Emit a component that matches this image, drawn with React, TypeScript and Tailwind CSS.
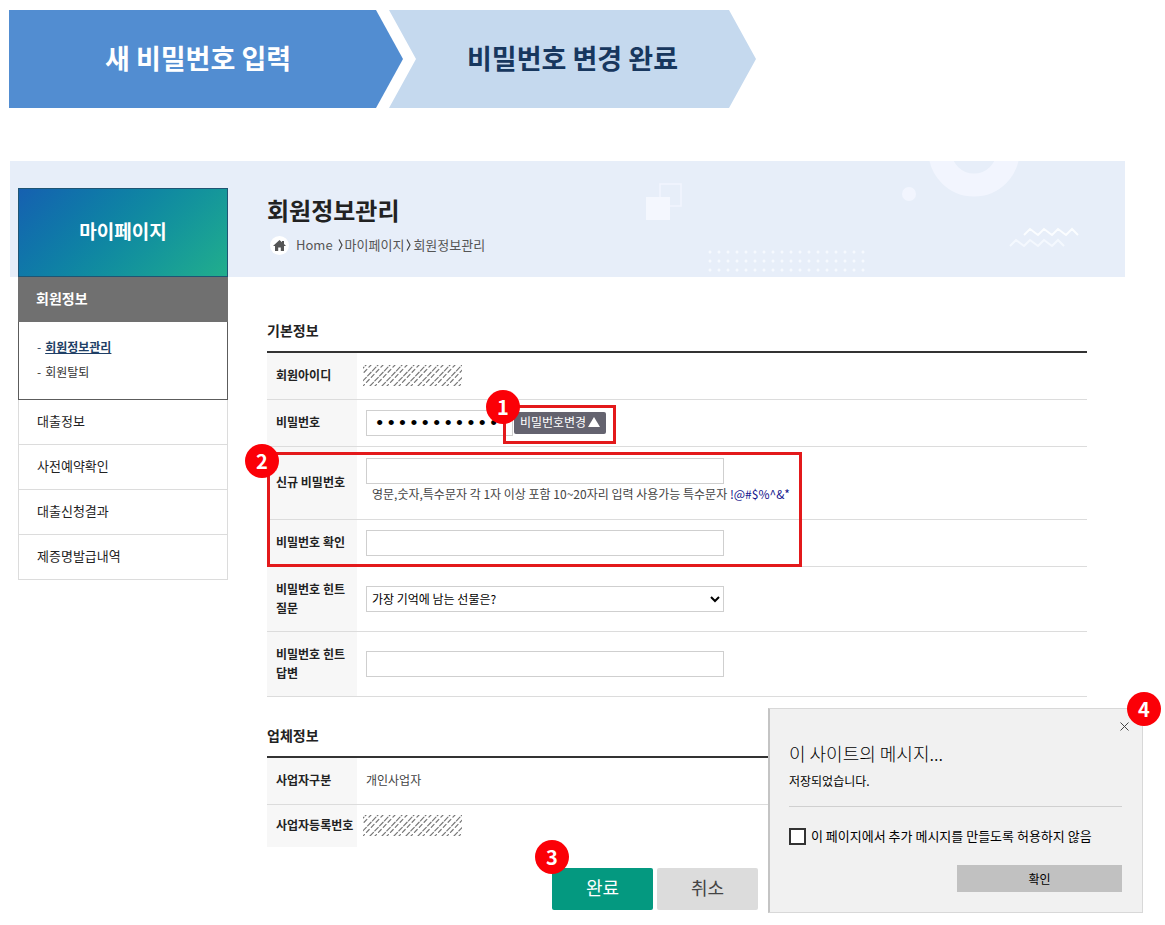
import React, { useState } from 'react';

const sideMenu = ['대출정보', '사전예약확인', '대출신청결과', '제증명발급내역'];

const inputClass = 'block h-[26px] w-[358px] border border-[#cfcfcf] bg-white px-[6px] text-[12px] outline-none';

const Badge: React.FC<{ no: number; className: string }> = ({ no, className }) => (
  <span
    className={`absolute flex size-[34px] items-center justify-center rounded-full bg-[#fb0007] text-[20px] leading-[20px] font-bold text-white ${className}`}
  >
    {no}
  </span>
);

const Masked: React.FC<{ id: string }> = ({ id }) => (
  <svg width="99" height="21" className="-ml-[3px] block" aria-label="비공개">
    <defs>
      <clipPath id={id}>
        <rect width="99" height="21" />
      </clipPath>
    </defs>
    <g clipPath={`url(#${id})`} stroke="#777" strokeWidth="1.2" strokeLinecap="round">
      {Array.from({ length: 10 }, (_, i) => (
        <React.Fragment key={i}>
          <line x1={i * 12 - 17} y1="21" x2={i * 12 + 3} y2="0" strokeDasharray="5 2" />
          <line x1={i * 12 - 12} y1="21" x2={i * 12 + 8} y2="0" strokeDasharray="4 3" strokeDashoffset="2" />
        </React.Fragment>
      ))}
    </g>
  </svg>
);

const Crumb: React.FC = () => (
  <svg width="5" height="12" viewBox="0 0 5 12" fill="none" stroke="#444" strokeWidth="1.2">
    <path d="M1 .5 4 6 1 11.5" />
  </svg>
);

const Row: React.FC<{ label: string; htmlFor?: string; height: string; last?: boolean; children: React.ReactNode }> = ({
  label,
  htmlFor,
  height,
  last,
  children,
}) => (
  <tr className={`${height} ${last ? '' : 'border-b border-[#dcdcdc]'}`}>
    <th scope="row" className="w-[90px] bg-[#f7f7f7] pb-[2px] pl-[9px] text-left text-[12px] leading-[19px] font-bold break-keep text-[#222]">
      {htmlFor ? <label htmlFor={htmlFor}>{label}</label> : label}
    </th>
    <td className="pl-[9px] text-[12px] text-[#444]">{children}</td>
  </tr>
);

const BannerArt: React.FC = () => (
  <svg width="440" height="116" viewBox="0 0 440 116" fill="none" className="absolute top-0 right-[42px]">
    <circle cx="331" cy="-10" r="34" stroke="#f2f5fe" strokeWidth="23" />
    <circle cx="266" cy="33" r="7" fill="#f2f5fe" />
    <rect x="17" y="23" width="21" height="22" stroke="#f2f5fe" strokeWidth="1.5" />
    <rect x="3" y="36" width="24" height="23" fill="#f4f7fe" />
    {[0, 1, 2].map(r =>
      Array.from({ length: 18 }, (_, c) => (
        <circle key={`${r}-${c}`} cx={67 + c * 9} cy={91 + r * 9} r="1.5" fill="#f6f9fe" />
      )),
    )}
    <path d="m381 74 6-6 8 6 6-6 8 6 6-6 8 6 6-6 6 6" stroke="#fbfdff" strokeWidth="2" />
    <path d="m367 85 6-6 8 6 6-6 8 6 6-6 8 6 6-6 6 6" stroke="#f4f8fe" strokeWidth="2" />
  </svg>
);

const Sidebar: React.FC = () => (
  <aside className="z-10 col-start-1 row-span-2 row-start-1 mt-[27px] ml-2 text-[13px]">
    <h2 className="flex h-[89px] items-center justify-center border border-[#1f5574] bg-linear-135 from-[#1660b0] to-[#22ae8c] pb-[2px] text-[19px] font-bold text-white">
      마이페이지
    </h2>
    <a href="#member" className="flex h-[45px] items-center bg-[#707070] px-[18px] pb-[2px] text-[14px] font-bold text-white">
      회원정보
    </a>
    <ul className="h-[78px] border border-t-0 border-[#5c5c5c] px-[18px] pt-3 text-[12px] leading-[25px] text-[#333]">
      <li>
        <span className="mr-1 text-[#1f3f66]">-</span>
        <a href="#info" className="font-bold text-[#1f3f66] underline">회원정보관리</a>
      </li>
      <li>
        <span className="mr-1">-</span>
        <a href="#leave">회원탈퇴</a>
      </li>
    </ul>
    <ul className="border-x border-[#dcdcdc] text-[#222]">
      {sideMenu.map(item => (
        <li key={item} className="border-b border-[#dcdcdc]">
          <a href="#menu" className="flex h-[44px] items-center px-[18px] pb-[2px]">{item}</a>
        </li>
      ))}
    </ul>
  </aside>
);

const MessageDialog: React.FC = () => (
  <div
    role="dialog"
    aria-labelledby="dialog-title"
    className="absolute top-[708px] right-[22px] z-20 w-[375px] border border-l-2 border-[#d8d8d8] border-l-[#c4c4c4] bg-[#f1f1f1] pt-8 pr-5 pb-5 pl-[19px] text-black"
  >
    <button type="button" aria-label="닫기" className="absolute top-[12px] right-[12px] p-[1px]">
      <svg width="9" height="9" viewBox="0 0 9 9" stroke="#444" strokeWidth="1">
        <path d="m.5.5 8 8m0-8-8 8" />
      </svg>
    </button>
    <h2 id="dialog-title" className="text-[18px] leading-6 font-light">이 사이트의 메시지...</h2>
    <p className="mt-[6px] text-[12px] leading-5">저장되었습니다.</p>
    <div className="mt-[15px] border-t border-[#d0d0d0]" />
    <label className="mt-[19px] flex items-center gap-[5px] text-[13px] leading-[20px]">
      <input type="checkbox" className="size-[17px] appearance-none border-2 border-[#333] bg-white checked:bg-[#333]" />
      이 페이지에서 추가 메시지를 만들도록 허용하지 않음
    </label>
    <button type="button" className="mt-[19px] ml-auto block h-[27px] w-[165px] bg-[#c1c1c1] text-[12px]">확인</button>
    <Badge no={4} className="-top-[17px] -right-[19px]" />
  </div>
);

export default function App() {
  const [hint, setHint] = useState('gift');

  return (
    <div className="relative min-h-screen bg-white pt-[10px] pb-[15px] font-['Noto_Sans_CJK_KR','Noto_Sans',sans-serif]">
      <ol className="flex h-[98px] pl-[9px] text-[27px] font-bold">
        <li className="flex w-[394px] items-center justify-center bg-[#528dd1] pr-4 pb-[2px] text-white [clip-path:polygon(0_0,calc(100%-27px)_0,100%_50%,calc(100%-27px)_100%,0_100%)]">
          새 비밀번호 입력
        </li>
        <li className="-ml-[14px] flex w-[367px] items-center justify-center bg-[#c5d9ee] pb-[2px] text-[#17375e] [clip-path:polygon(0_0,calc(100%-27px)_0,100%_50%,calc(100%-27px)_100%,0_100%,27px_50%)]">
          비밀번호 변경 완료
        </li>
      </ol>

      <main className="mt-[53px] mr-10 ml-[10px] grid grid-cols-[218px_1fr] grid-rows-[116px_auto]">
        <div className="relative col-span-2 col-start-1 row-start-1 overflow-hidden bg-[#e7eef9]">
          <BannerArt />
        </div>

        <Sidebar />

        <header className="z-10 col-start-2 row-start-1 pt-[31px] pl-[39px]">
          <h1 className="text-[24px] leading-9 font-bold text-[#222]">회원정보관리</h1>
          <nav className="mt-[7px] flex items-center text-[13px] leading-5 text-[#555]">
            <span className="mr-[7px] ml-[3px] flex size-[19px] items-center justify-center rounded-full bg-white">
              <svg width="13" height="11" viewBox="0 0 13 11" fill="#555">
                <path d="M6.5 0 0 6h2v5h3.2V7.5h2.6V11H11V6h2l-2-1.9V1H9v1.3z" />
              </svg>
            </span>
            <a href="#home" className="mr-[5px]">Home</a>
            <Crumb />
            <a href="#mypage" className="mx-[2px]">마이페이지</a>
            <Crumb />
            <span className="ml-[2px]">회원정보관리</span>
          </nav>
        </header>

        <form className="col-start-2 row-start-2 mr-[38px] ml-[39px] pt-[41px]" onSubmit={e => e.preventDefault()}>
          <h2 className="h-[33px] text-[14px] leading-6 font-bold text-[#222]">기본정보</h2>
          <div className="relative">
            <table className="w-full border-t-2 border-[#333]">
              <tbody>
                <Row label="회원아이디" height="h-[47px]">
                  <Masked id="mask-id" />
                </Row>
                <Row label="비밀번호" htmlFor="password" height="h-[47px]">
                  <div className="flex items-center gap-[1px]">
                    <input
                      id="password"
                      type="password"
                      defaultValue="abcdefghijk"
                      className="block h-[26px] w-[147px] border border-[#cfcfcf] px-[7px] pt-1 font-['Liberation_Mono',monospace] text-[19px] text-black outline-none"
                    />
                    <div className="relative">
                      <button type="button" className="flex h-[22px] w-[92px] items-center justify-center gap-[2px] rounded-[2px] bg-[#64636f] pb-[2px] text-[12px] text-white">
                        비밀번호변경
                        <svg width="12" height="11" viewBox="0 0 12 11" fill="#fff">
                          <path d="M6 1 12 11H0z" />
                        </svg>
                      </button>
                      <div className="pointer-events-none absolute -top-[7px] -left-[11px] h-[39px] w-[113px] border-3 border-[#e3191b]" />
                      <Badge no={1} className="-top-[22px] -left-[28px]" />
                    </div>
                  </div>
                </Row>
                <Row label="신규 비밀번호" htmlFor="new-password" height="h-[73px]">
                  <input id="new-password" type="password" className={inputClass} />
                  <p className="pb-1 pl-[6px] leading-5">
                    영문,숫자,특수문자 각 1자 이상 포함 10~20자리 입력 사용가능 특수문자{' '}
                    <span className="text-[#13138c]">!@#$%^&amp;*</span>
                  </p>
                </Row>
                <Row label="비밀번호 확인" htmlFor="confirm" height="h-[47px]">
                  <input id="confirm" type="password" className={inputClass} />
                </Row>
                <Row label="비밀번호 힌트 질문" htmlFor="hint" height="h-[65px]">
                  <select
                    id="hint"
                    value={hint}
                    onChange={e => setHint(e.target.value)}
                    className="block h-[26px] w-[358px] border border-[#cfcfcf] bg-white px-[1px] text-[12px] text-black"
                  >
                    <option value="gift">가장 기억에 남는 선물은?</option>
                  </select>
                </Row>
                <Row label="비밀번호 힌트 답변" htmlFor="answer" height="h-[65px]">
                  <input id="answer" type="text" className={inputClass} />
                </Row>
              </tbody>
            </table>
            <div className="pointer-events-none absolute top-[101px] left-0 h-[115px] w-[535px] border-3 border-[#e3191b]">
              <Badge no={2} className="-top-[11px] -left-[25px]" />
            </div>
          </div>

          <h2 className="mt-[26px] h-[33px] text-[14px] leading-6 font-bold text-[#222]">업체정보</h2>
          <table className="w-full border-t-2 border-[#333]">
            <tbody>
              <Row label="사업자구분" height="h-[48px]">
                <p className="pb-[2px]">개인사업자</p>
              </Row>
              <Row label="사업자등록번호" height="h-[42px]" last>
                <Masked id="mask-biz" />
              </Row>
            </tbody>
          </table>

          <div className="mt-[21px] flex justify-center gap-1 pr-[44px] text-[18px]">
            <div className="relative">
              <button type="submit" className="h-[42px] w-[101px] rounded-[2px] bg-[#049980] pb-[2px] text-white">완료</button>
              <Badge no={3} className="-top-[28px] -left-[17px]" />
            </div>
            <button type="button" className="h-[42px] w-[101px] rounded-[2px] bg-[#dcdcdc] pb-[2px] text-[#444]">취소</button>
          </div>
        </form>
      </main>

      <MessageDialog />
    </div>
  );
}
